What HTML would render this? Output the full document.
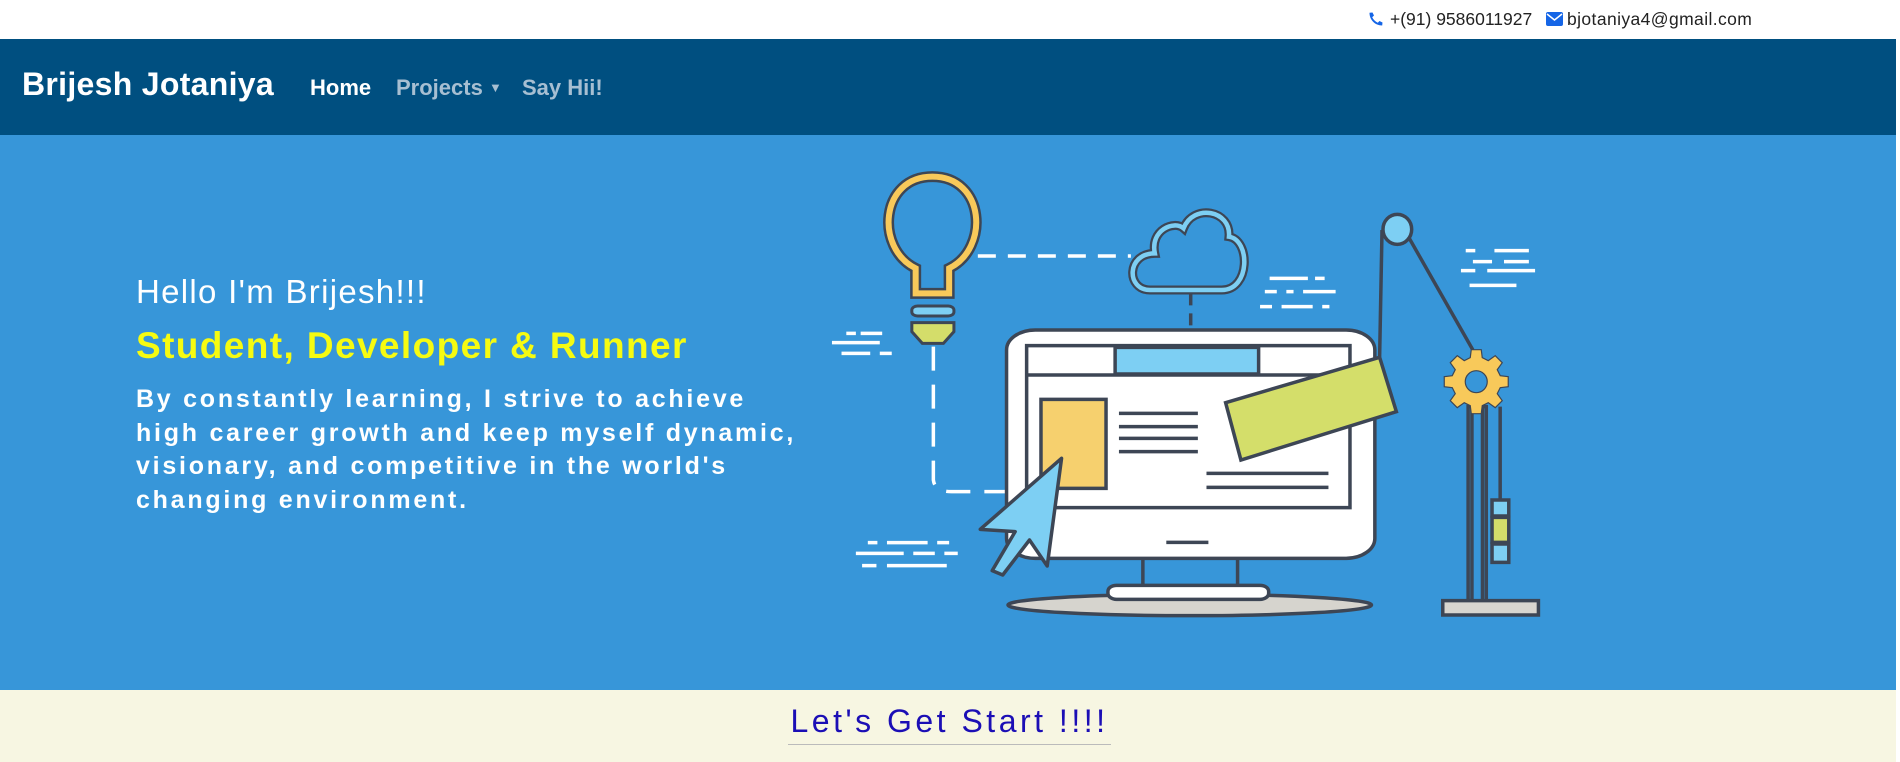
<!DOCTYPE html>
<html><head><meta charset="utf-8"><style>
*{margin:0;padding:0;box-sizing:border-box}
body{width:1900px;height:762px;overflow:hidden;font-family:"Liberation Sans",sans-serif;background:#fff;position:relative}
.top{position:absolute;top:0;left:0;width:1900px;height:39px;background:#fff}
.top span{position:absolute;top:9px;font-size:17.5px;color:#222}
nav{position:absolute;top:39px;left:0;width:1896px;height:96px;background:#004f80}
.brand{position:absolute;left:22px;top:27px;font-size:32px;color:#fff;font-weight:bold;letter-spacing:0.3px}
.nl{position:absolute;top:36px;font-size:22px;font-weight:bold;color:#a7bfd2}
.hero{position:absolute;top:135px;left:0;width:1896px;height:555px;background:#3796d9}
.h1{position:absolute;left:136px;top:138px;font-size:33px;color:#fff;letter-spacing:1.3px}
.h2{position:absolute;left:136px;top:190px;font-size:37px;color:#f6fb11;font-weight:bold;letter-spacing:1.4px}
.p{position:absolute;left:136px;top:248px;width:800px;font-size:25px;line-height:33.5px;color:#fff;letter-spacing:2.75px;font-weight:bold;white-space:nowrap}
.bot{position:absolute;top:690px;left:0;width:1896px;height:72px;background:#f7f6e2}
.bot div{position:absolute;left:788px;top:13px;width:323px;text-align:center;font-size:32px;color:#1b0eb5;letter-spacing:3.5px;border-bottom:1px solid #bbb;padding-bottom:4px}
.sb{position:absolute;right:0;top:39px;width:4px;height:723px;background:#fff}
</style></head><body>
<div class="top">
<svg style="position:absolute;left:1368px;top:11px" width="16" height="16" viewBox="0 0 16 16"><path d="M14.5 11.5l-3-1.5-1.7 1.8C7.4 10.6 5.4 8.6 4.2 6.2L6 4.5 4.5 1.5 1.5 1.8C1.5 9 7 14.5 14.2 14.5z" fill="#1565e6"/></svg>
<span style="left:1390px">+(91) 9586011927</span>
<svg style="position:absolute;left:1546px;top:12px" width="17" height="14" viewBox="0 0 17 14"><rect x="0" y="0" width="17" height="14" rx="2" fill="#1565e6"/><path d="M1 2l7.5 6L16 2" stroke="#fff" stroke-width="1.5" fill="none"/></svg>
<span style="left:1567px;letter-spacing:0.4px">bjotaniya4@gmail.com</span>
</div>
<nav>
<div class="brand">Brijesh Jotaniya</div>
<div class="nl" style="left:310px;color:#fff">Home</div>
<div class="nl" style="left:396px">Projects <span style="font-size:13px;vertical-align:3px">▼</span></div>
<div class="nl" style="left:522px">Say Hii!</div>
</nav>
<div class="hero">
<div class="h1">Hello I'm Brijesh!!!</div>
<div class="h2">Student, Developer &amp; Runner</div>
<div class="p">By constantly learning, I strive to achieve<br>high career growth and keep myself dynamic,<br>visionary, and competitive in the world's<br>changing environment.</div>
</div>
<svg style="position:absolute;left:820px;top:160px" width="750" height="470" viewBox="0 0 1568 1410" preserveAspectRatio="none">
<g fill="none" stroke="#fff" stroke-width="3.5" vector-effect="non-scaling-stroke">
<path d="M330 288H650" stroke-dasharray="18 12" vector-effect="non-scaling-stroke"/>
<path d="M237 560V960Q240 995 275 995H390" stroke-dasharray="24 14" vector-effect="non-scaling-stroke"/>
<path d="M55 520h20M85 520h45M25 548h100M45 580h60M125 580h25M940 355h80M1035 355h20M930 395h25M975 395h15M1010 395h68M920 440h25M965 440h65M1050 440h15M1350 272h20M1410 272h72M1365 305h40M1430 305h52M1340 332h30M1395 332h100M1358 376h98M100 1148h20M140 1148h85M245 1148h25M75 1180h100M195 1180h45M260 1180h28M88 1217h30M140 1217h125" vector-effect="non-scaling-stroke"/>
</g>
<path d="M775 400V505" stroke="#3d4655" stroke-width="3.5" stroke-dasharray="12 8" vector-effect="non-scaling-stroke"/>
<path d="M200 400V325C115 265 125 50 235 50C345 50 355 265 270 325V400Z" fill="none" stroke="#3d4655" stroke-width="11" vector-effect="non-scaling-stroke"/>
<path d="M200 400V325C115 265 125 50 235 50C345 50 355 265 270 325V400Z" fill="none" stroke="#f8c95a" stroke-width="6" vector-effect="non-scaling-stroke"/>
<rect x="192" y="438" width="88" height="30" rx="12" fill="#7dcff3" stroke="#3d4655" stroke-width="3" vector-effect="non-scaling-stroke"/>
<path d="M192 488H280V515L258 550H214L192 515Z" fill="#d4dd6a" stroke="#3d4655" stroke-width="3" vector-effect="non-scaling-stroke"/>
<path d="M690 390C640 390 640 280 700 280C690 210 740 180 760 205C780 130 860 150 855 230C900 240 900 390 840 390Z" fill="none" stroke="#3d4655" stroke-width="9" vector-effect="non-scaling-stroke"/>
<path d="M690 390C640 390 640 280 700 280C690 210 740 180 760 205C780 130 860 150 855 230C900 240 900 390 840 390Z" fill="none" stroke="#7dcff3" stroke-width="4.5" vector-effect="non-scaling-stroke"/>
<line x1="1175" y1="210" x2="1170" y2="590" stroke="#3d4655" stroke-width="3.5" vector-effect="non-scaling-stroke"/>
<line x1="1230" y1="230" x2="1365" y2="570" stroke="#3d4655" stroke-width="3.5" vector-effect="non-scaling-stroke"/>
<g stroke="#3d4655" stroke-width="3.5" vector-effect="non-scaling-stroke">
<rect x="1355" y="740" width="8" height="585" fill="#3796d9" vector-effect="non-scaling-stroke"/>
<rect x="1385" y="740" width="8" height="585" fill="#3796d9" vector-effect="non-scaling-stroke"/>
<line x1="1422" y1="740" x2="1422" y2="1020" vector-effect="non-scaling-stroke"/>
<rect x="1405" y="1020" width="35" height="48" fill="#7dcff3" vector-effect="non-scaling-stroke"/>
<rect x="1405" y="1072" width="35" height="75" fill="#d4dd6a" vector-effect="non-scaling-stroke"/>
<rect x="1405" y="1152" width="35" height="55" fill="#7dcff3" vector-effect="non-scaling-stroke"/>
<rect x="1302" y="1322" width="200" height="43" fill="#d8d6d0" vector-effect="non-scaling-stroke"/>
<ellipse cx="1207" cy="208" rx="30" ry="45" fill="#7dcff3" vector-effect="non-scaling-stroke"/>
<ellipse cx="773" cy="1335" rx="380" ry="32" fill="#d6d4ce" vector-effect="non-scaling-stroke"/>
<line x1="675" y1="1190" x2="675" y2="1285" vector-effect="non-scaling-stroke"/>
<line x1="873" y1="1190" x2="873" y2="1285" vector-effect="non-scaling-stroke"/>
<rect x="602" y="1276" width="336" height="42" rx="18" fill="#fff" vector-effect="non-scaling-stroke"/>
<rect x="390" y="510" width="770" height="685" rx="60" fill="#fff" vector-effect="non-scaling-stroke"/>
<rect x="432" y="557" width="676" height="486" fill="#fff" vector-effect="non-scaling-stroke"/>
<line x1="432" y1="645" x2="1108" y2="645" vector-effect="non-scaling-stroke"/>
<rect x="617" y="562" width="300" height="80" fill="#7dcff3" vector-effect="non-scaling-stroke"/>
<rect x="462" y="718" width="136" height="267" fill="#f6d06e" vector-effect="non-scaling-stroke"/>
<path d="M625 760H790M625 800H790M625 835H790M625 875H790M808 940H1063M808 982H1063M724 1147H812" vector-effect="non-scaling-stroke"/>
<polygon points="848,728 1170,592 1205,755 880,900" fill="#d4de6a" vector-effect="non-scaling-stroke"/>
<path d="M505 895L475 1218L438 1140L382 1245L360 1232L408 1115L335 1108Z" fill="#7dcff3" stroke-linejoin="round" vector-effect="non-scaling-stroke"/>
</g>
<g transform="translate(1372,665) scale(2.09,3)">
<path d="M-5-32h10l1 8 6 3 7-5 7 7-5 7 3 6 8 1v10l-8 1-3 6 5 7-7 7-7-5-6 3-1 8h-10l-1-8-6-3-7 5-7-7 5-7-3-6-8-1v-10l8-1 3-6-5-7 7-7 7 5 6-3z" fill="#f8c95a" stroke="#3d4655" stroke-width="1.2"/>
<circle r="11" fill="#3796d9" stroke="#3d4655" stroke-width="1.2"/>
</g>
</svg>
<div class="bot"><div>Let's Get Start !!!!</div></div>
<div class="sb"></div>
</body></html>
